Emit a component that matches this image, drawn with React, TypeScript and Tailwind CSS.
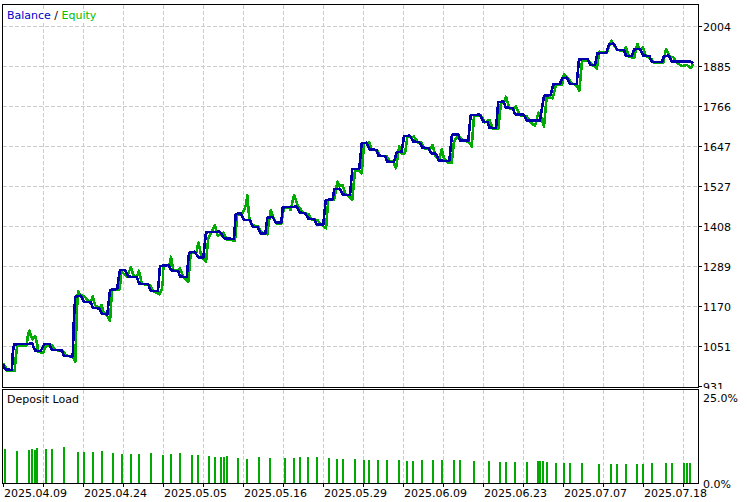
const font = "font-['DejaVu_Sans',sans-serif] text-[11px] leading-[13px]";

// traced points, each segment in its own crop coords (3x) with its origin
type Seg = [number, number, number[]];

const toPoints = (segs: Seg[]) =>
  segs
    .flatMap(([ox, oy, p]) => {
      const out: string[] = [];
      for (let i = 0; i < p.length; i += 2) {
        out.push(`${(ox + p[i] / 3).toFixed(1)},${(oy + p[i + 1] / 3).toFixed(1)}`);
      }
      return out;
    })
    .join(' ');

const balance: Seg[] = [
  [0, 280, [10,253,15,268,36,270,38,222,42,193,97,191,105,212,122,213,133,192,148,192,156,210,185,211,192,228,218,229,222,110,226,50,242,47,252,66,272,67,279,84,298,85,306,102,322,103,330,30,352,27,355,0]],
  [120, 180, [0,270,16,270,24,290,50,291,57,311,85,313,92,333,114,333,120,258,145,255,155,272,175,273,180,290,200,291,207,218,225,215,234,232,250,234,258,157,300,155,312,175,342,177,347,102,362,100,372,120,390,120,398,140,412,141,422,160,436,161,442,113,458,111,467,128,484,128,488,82,530,80,540,98,555,99,565,116,582,117,590,134,610,134,617,60,638,58,643,28,660,26]],
  [320, 90, [68,314,90,315,97,238,118,236,125,160,140,158,148,178,170,180,175,197,195,198,202,215,222,216,230,186,245,185,252,138,270,137,280,155,298,156,307,173,325,174,333,190,348,191,357,212,388,213,396,134,415,133,420,152,445,152,452,75,480,74,490,95,503,96,508,113,528,114,535,36,550,35,558,53,578,54,585,73,612,74,620,92,660,92]],
  [500, 0, [132,287,152,285,160,253,180,252,186,235,200,233,210,252,230,252,237,178,262,177,272,195,285,195,292,160,318,159,328,132,342,131,352,150,372,150,378,168,395,168,403,148,420,147,430,167,448,168,456,186,486,186,492,168,507,167,516,185,570,185,580,190]],
];

const equity: Seg[] = [
  [0, 280, [10,250,20,268,22,272,44,272,48,225,52,198,80,196,84,165,88,152,92,165,98,178,106,168,112,195,113,215,130,218,135,200,155,195,165,210,188,212,198,226,220,232,226,245,230,105,234,32,240,45,255,50,262,60,272,68,278,48,285,75,298,85,305,75,310,95,320,105,330,122,336,30,358,30,362,0]],
  [120, 180, [0,300,5,275,20,290,33,262,40,285,50,290,57,272,65,310,68,312,90,315,98,332,118,343,125,330,129,300,130,258,148,258,153,230,160,270,175,272,180,265,190,290,205,305,212,220,230,215,235,188,245,232,258,245,265,175,285,135,293,168,310,158,320,178,345,182,352,105,368,100,378,75,382,45,388,115,395,135,415,140,425,158,442,163,448,118,452,90,462,118,470,130,484,130,492,82,505,82,512,90,522,45,535,80,552,100,565,102,575,118,592,120,605,135,618,145,625,60,642,60,648,30,652,5]],
  [320, 90, [58,288,68,285,75,310,85,318,97,330,105,240,118,242,125,250,132,160,148,158,155,178,172,182,180,198,200,198,208,212,220,215,228,235,238,168,245,190,255,190,262,142,282,140,295,158,305,158,312,175,328,178,338,165,345,195,358,212,365,178,372,205,385,218,395,218,402,155,415,135,428,152,447,155,455,170,462,78,482,76,495,97,508,90,518,115,535,116,543,38,552,38,558,20,568,55,580,55,588,50,600,76,620,78,630,95,645,108,655,68,660,70]],
  [500, 0, [122,345,132,380,140,290,158,295,168,255,186,255,192,222,205,235,215,250,228,255,238,272,246,182,265,182,290,206,298,155,320,158,334,122,352,150,370,152,378,143,388,170,402,175,412,132,420,150,428,142,438,168,455,178,462,188,490,188,498,147,510,170,520,172,530,188,545,198,560,195,572,204,580,192]],
];

// deposit load bars: page x, crop y of the top (origin y 280, 3x)
const bars: [number, number][] = [
  [5,507],[17,513],[29,510],[32,508],[35,510],[37,505],[46,507],[52,507],[64,501],[78,516],[84,516],[93,516],[102,513],[113,519],[122,522],[131,522],[139,522],[151,519],[163,525],[171,522],[180,519],[192,525],[198,525],[209,528],[215,531],[221,531],[224,531],[227,528],[238,534],[247,537],
  [259,531],[270,534],[285,534],[294,534],[300,531],[308,531],[317,531],[329,534],[337,537],[343,537],[355,537],[364,540],[369,540],[378,540],[387,540],[399,540],[407,543],[413,543],[422,540],[433,540],[442,540],[454,540],[460,540],[474,543],[489,543],[500,546],
  [506,546],[515,546],[527,546],[538,543],[540,543],[543,543],[547,546],[556,549],[564,549],[570,549],[582,549],[599,552],[611,552],[617,552],[626,552],[637,552],[643,552],[652,549],[666,549],[672,549],[684,549],[687,549],[690,549],
];

const gridX = Array.from({ length: 17 }, (_, i) => 43 + i * 40);
const gridY = [26, 66, 106, 146, 186, 226, 266, 306, 346];
const prices = ['2004', '1885', '1766', '1647', '1527', '1408', '1289', '1170', '1051', '931'];
const dates = ['2025.04.09', '2025.04.24', '2025.05.05', '2025.05.16', '2025.05.29', '2025.06.09', '2025.06.23', '2025.07.07', '2025.07.18'];

function PriceChart() {
  return (
    <svg width={695} height={382} viewBox="3 5 695 382" className="block">
      {gridX.map(x => (
        <line key={x} x1={x + 0.5} x2={x + 0.5} y1={5} y2={387} stroke="#cccccc" strokeDasharray="4 2" />
      ))}
      {gridY.map(y => (
        <line key={y} x1={3} x2={698} y1={y + 0.5} y2={y + 0.5} stroke="#cccccc" strokeDasharray="4 2" />
      ))}
      <polyline points={toPoints(equity)} fill="none" stroke="#00aa00" strokeWidth={2.6} strokeLinejoin="round" shapeRendering="crispEdges" />
      <polyline points={toPoints(balance)} fill="none" stroke="#0000a8" strokeWidth={2.6} strokeLinejoin="round" shapeRendering="crispEdges" />
    </svg>
  );
}

function LoadChart() {
  return (
    <svg width={695} height={93} viewBox="3 390 695 93" className="block">
      {gridX.map(x => (
        <line key={x} x1={x + 0.5} x2={x + 0.5} y1={390} y2={483} stroke="#cccccc" strokeDasharray="4 2" />
      ))}
      {bars.map(([x, top]) => (
        <rect key={x} x={x - 1} y={Math.round(280 + top / 3)} width={2} height={483 - Math.round(280 + top / 3)} fill="#00aa00" />
      ))}
    </svg>
  );
}

export default function App() {
  return (
    <div className={`w-[747px] h-[502px] bg-white text-black pt-[4px] pl-[2px] overflow-hidden ${font}`}>
      {/* equity pane */}
      <div className="flex h-[385px]">
        <div className="relative w-[697px] h-[384px] border border-black shrink-0">
          <PriceChart />
          <div className="absolute left-[4px] top-[4px] bg-white">
            <span className="text-[#0000c8]">Balance</span>
            <span> / </span>
            <span className="text-[#00c000]">Equity</span>
          </div>
        </div>
        <div className="flex-1 h-[385px] overflow-hidden pt-[2px]">
          {prices.map(p => (
            <div key={p} className="flex items-center h-[40px]">
              <div className="w-[3px] h-px bg-black" />
              <span className="ml-[1px] pt-[2px]">{p}</span>
            </div>
          ))}
        </div>
      </div>

      {/* deposit load pane */}
      <div className="flex h-[95px] items-start">
        <div className="relative w-[697px] h-[95px] border border-black shrink-0">
          <LoadChart />
          <div className="absolute left-[4px] top-[3px]">Deposit Load</div>
        </div>
        <div className="relative z-10 flex flex-col justify-between h-[102px] pt-[3px] pl-[4px]">
          <span>25.0%</span>
          <span>0.0%</span>
        </div>
      </div>

      {/* time axis */}
      <div className="flex h-[3px] pl-px">
        {Array.from({ length: 18 }, (_, i) => (
          <div key={i} className="w-[40px] shrink-0 border-l border-black" />
        ))}
      </div>
      <div className="flex pl-[2px]">
        {dates.map(d => (
          <span key={d} className="w-[80px] shrink-0">{d}</span>
        ))}
      </div>
    </div>
  );
}
